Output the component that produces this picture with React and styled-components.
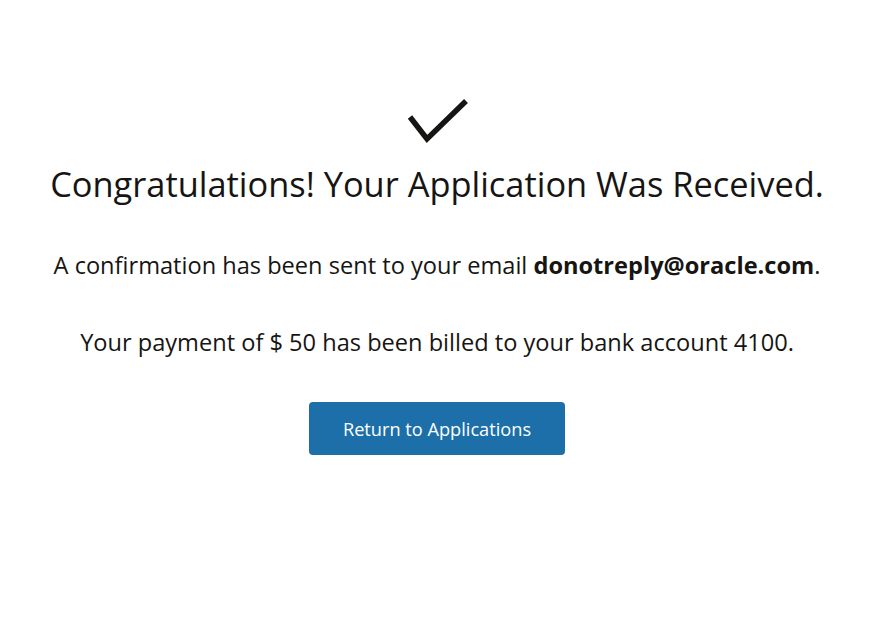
import styled, { createGlobalStyle } from "styled-components";

const GlobalStyle = createGlobalStyle`
  html, body {
    margin: 0;
    padding: 0;
    background: #fff;
  }
  body {
    font-family: "Open Sans", "Noto Sans", sans-serif;
    color: #161513;
  }
`;

const Page = styled.main`
  min-height: 618px;
  display: flex;
  flex-direction: column;
  align-items: center;
  padding: 99px 0 0 4px;
  box-sizing: border-box;
`;

const Check = styled.svg`
  width: 64px;
  height: 47px;
  display: block;
`;

const Title = styled.h1`
  margin: 16px 0 0;
  font-size: 34.4px;
  font-weight: 400;
  line-height: 44px;
  letter-spacing: 0;
`;

const Message = styled.p`
  margin: ${(p) => p.$top}px 0 0;
  font-size: 23.6px;
  line-height: 30px;
`;

const Email = styled.strong`
  font-weight: 700;
`;

const Button = styled.button`
  margin-top: 45px;
  width: 256px;
  height: 53px;
  border: none;
  border-radius: 4px;
  background: #1d6fa9;
  color: #fff;
  font-family: inherit;
  font-size: 18.2px;
  cursor: pointer;
`;

export default function App() {
  return (
    <>
      <GlobalStyle />
      <Page>
        <Check viewBox="0 0 64 47" aria-hidden="true">
          <path d="M5 18 L22 40 L61 2" fill="none" stroke="#161513" strokeWidth="5.5" />
        </Check>
        <Title>Congratulations! Your Application Was Received.</Title>
        <Message $top={44}>
          A confirmation has been sent to your email{" "}
          <Email>donotreply@oracle.com</Email>.
        </Message>
        <Message $top={47}>
          Your payment of $ 50 has been billed to your bank account 4100.
        </Message>
        <Button>Return to Applications</Button>
      </Page>
    </>
  );
}
